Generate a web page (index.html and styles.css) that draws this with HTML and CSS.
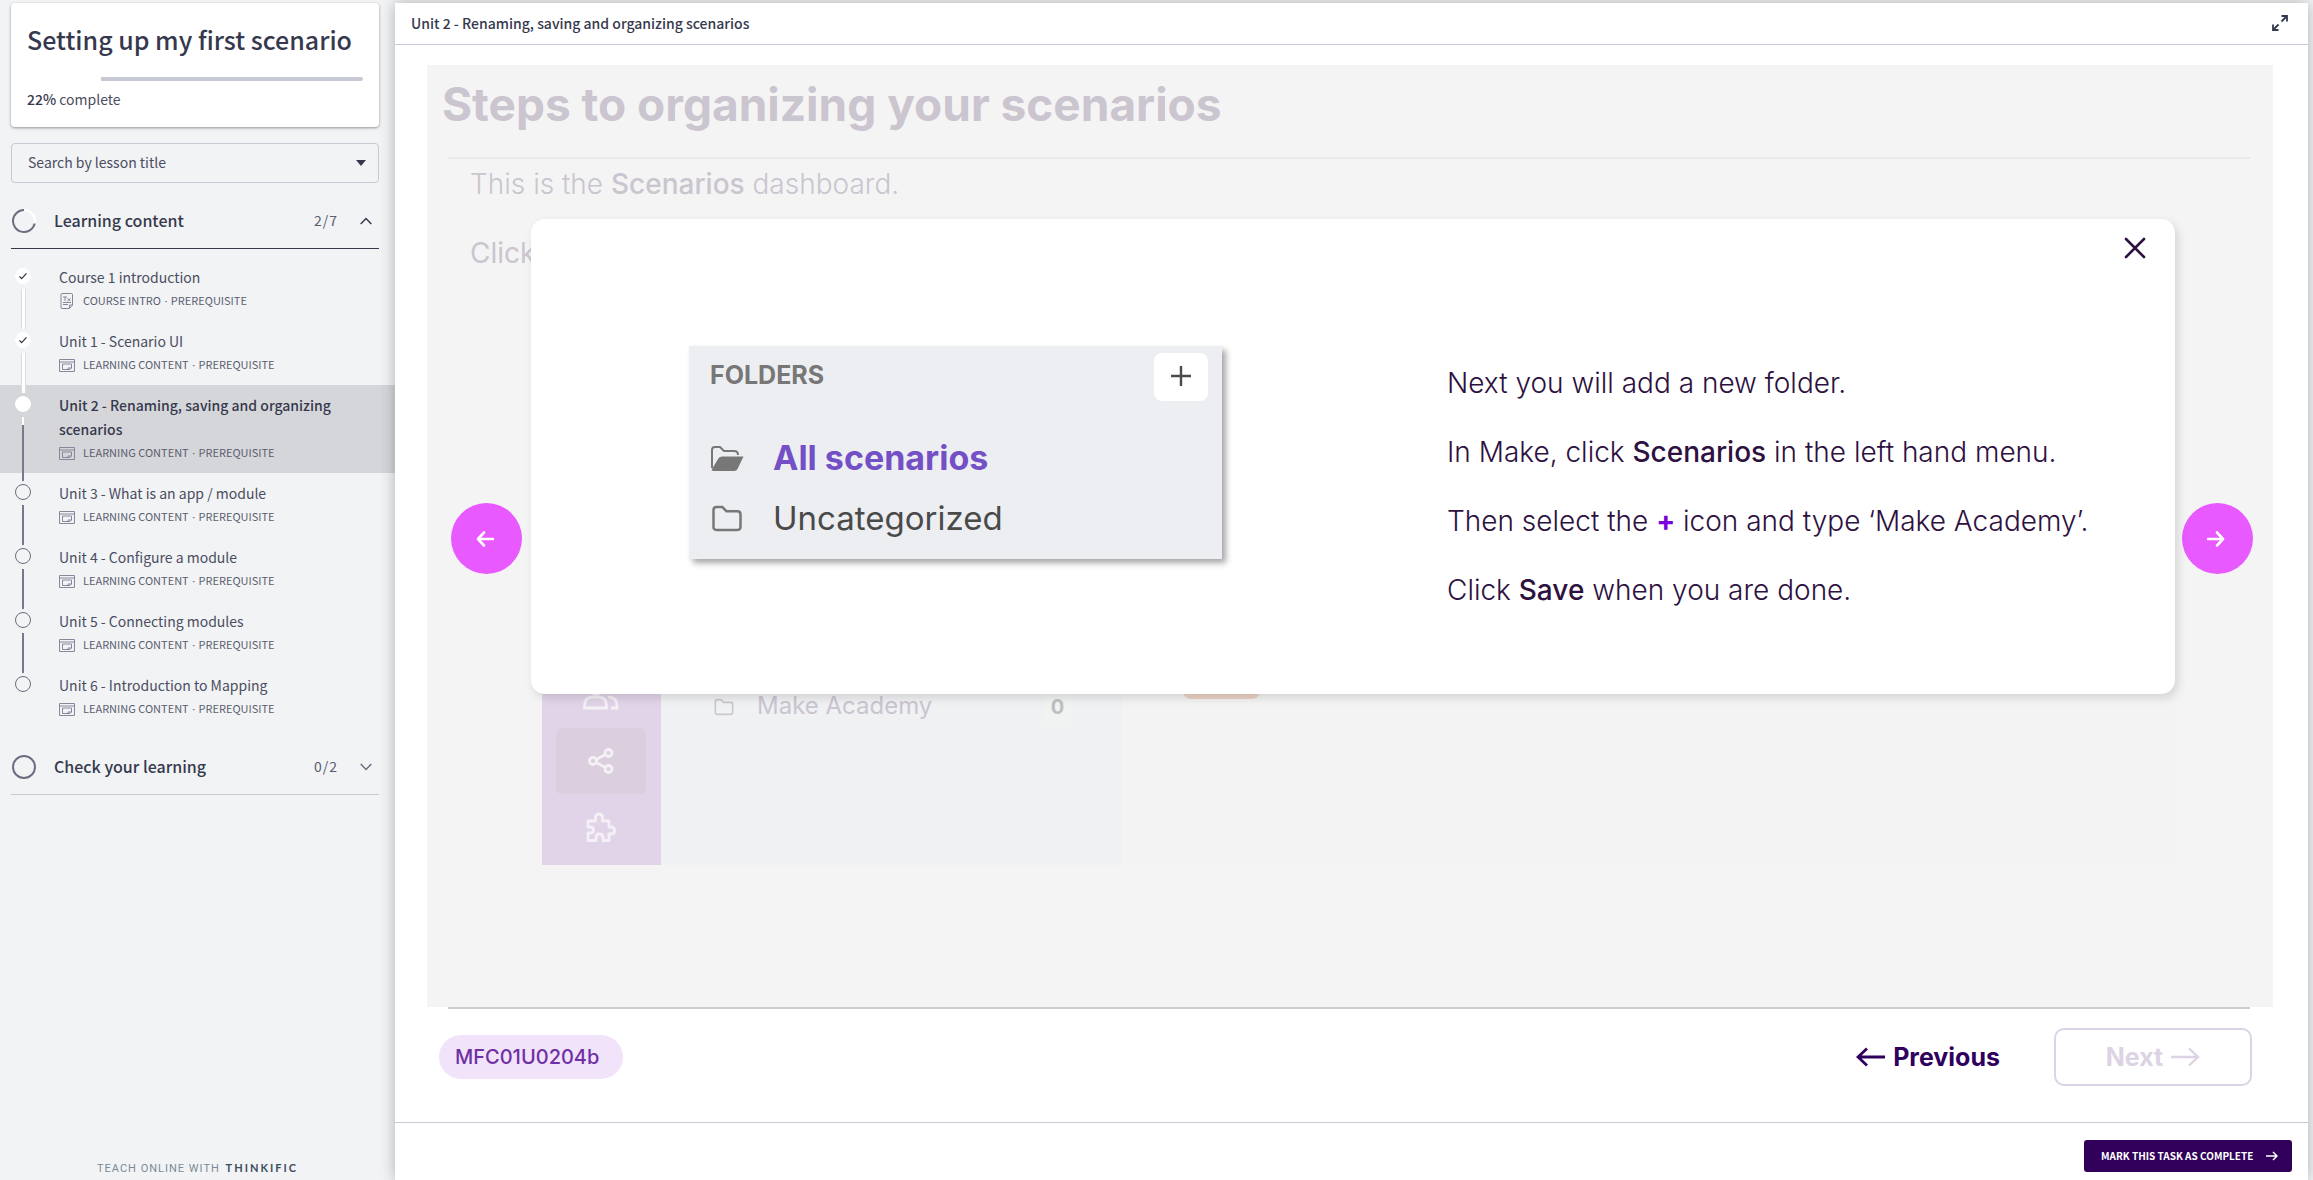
FILE: index.html
```html
<!DOCTYPE html>
<html lang="en">
<head>
<meta charset="utf-8">
<meta name="viewport" content="width=device-width, initial-scale=1">
<title>Setting up my first scenario</title>
<link rel="stylesheet" href="styles.css">
</head>
<body>
<svg class="sprite" aria-hidden="true">
  <symbol id="i-media" viewBox="0 0 16 13"><path d="M.5.5h15v12H.5zM.5 3h15M12.500 9V5h-9v5.500h7.500zM9 10.500V9h3.500" fill="none" stroke="currentColor"/></symbol>
  <symbol id="i-doc" viewBox="0 0 14 16"><path d="M2 .5h9.500q1 0 1 1V12l-3 3.500H2q-1 0-1-1v-13q0-1 1-1zM12.500 12h-3v3.500M3 9.500h8M3 11.500h5M3 4h4M5 4v4M7.500 5.500l3 2.500M10.500 5.500l-3 2.500" fill="none" stroke="currentColor"/></symbol>
  <symbol id="i-check" viewBox="0 0 16 16"><path d="M4 8.500 6.500 11 12 5" fill="none" stroke="#36394d" stroke-width="1.500"/></symbol>
  <symbol id="i-folder" viewBox="0 0 30 26"><path d="M2 5q0-3 3-3h5.500l4 4H25q3 0 3 3v12q0 3-3 3H5q-3 0-3-3z" fill="none" stroke="currentColor" stroke-width="2.400"/></symbol>
</svg>

<div class="app">
  <aside class="sidebar">
    <header class="course">
      <h1 class="course-title">Setting up my first scenario</h1>
      <div class="progress" role="progressbar" aria-label="Course progress" aria-valuenow="22" aria-valuemin="0" aria-valuemax="100"><div class="progress-fill" style="width:22%"></div></div>
      <p class="progress-text"><strong>22%</strong> complete</p>
    </header>

    <div class="search">
      <select class="search-select" aria-label="Search by lesson title"><option>Search by lesson title</option></select>
      <svg class="search-caret" width="10" height="6" viewBox="0 0 10 6"><path d="M0 0h10L5 6z" fill="#36394d"/></svg>
    </div>

    <nav class="chapters" aria-label="Course content">
      <section>
        <button class="chapter open" type="button" aria-expanded="true">
          <svg class="ring" width="24" height="24" viewBox="0 0 24 24" fill="none" stroke-width="2"><circle cx="12" cy="12" r="11" stroke="#fff"/><path d="M12 1a11 11 0 1 0 10.700 13.500" stroke="#6b6d80"/></svg>
          <span class="chapter-name">Learning content</span>
          <span class="chapter-count">2/7</span>
          <svg width="12" height="8" viewBox="0 0 12 8" fill="none" stroke="#36394d" stroke-width="1.500"><path d="M.7 7 6 1.500 11.300 7"/></svg>
        </button>
        <ol class="lessons">
          <li class="lesson done">
            <span class="rail"><svg class="dot" width="16" height="16"><use href="#i-check"/></svg></span>
            <a class="lesson-link" href="#">Course 1 introduction<span class="meta"><svg class="meta-icon" width="16" height="16"><use href="#i-doc"/></svg><span>COURSE INTRO <i>·</i> PREREQUISITE</span></span></a>
          </li>
          <li class="lesson done">
            <span class="rail"><svg class="dot" width="16" height="16"><use href="#i-check"/></svg></span>
            <a class="lesson-link" href="#">Unit 1 - Scenario UI<span class="meta"><svg class="meta-icon" width="16" height="13"><use href="#i-media"/></svg><span>LEARNING CONTENT <i>·</i> PREREQUISITE</span></span></a>
          </li>
          <li class="lesson current">
            <span class="rail"><span class="dot"></span></span>
            <a class="lesson-link" href="#" aria-current="page">Unit 2 - Renaming, saving and organizing scenarios<span class="meta"><svg class="meta-icon" width="16" height="13"><use href="#i-media"/></svg><span>LEARNING CONTENT <i>·</i> PREREQUISITE</span></span></a>
          </li>
          <li class="lesson">
            <span class="rail"><span class="dot"></span></span>
            <a class="lesson-link" href="#">Unit 3 - What is an app / module<span class="meta"><svg class="meta-icon" width="16" height="13"><use href="#i-media"/></svg><span>LEARNING CONTENT <i>·</i> PREREQUISITE</span></span></a>
          </li>
          <li class="lesson">
            <span class="rail"><span class="dot"></span></span>
            <a class="lesson-link" href="#">Unit 4 - Configure a module<span class="meta"><svg class="meta-icon" width="16" height="13"><use href="#i-media"/></svg><span>LEARNING CONTENT <i>·</i> PREREQUISITE</span></span></a>
          </li>
          <li class="lesson">
            <span class="rail"><span class="dot"></span></span>
            <a class="lesson-link" href="#">Unit 5 - Connecting modules<span class="meta"><svg class="meta-icon" width="16" height="13"><use href="#i-media"/></svg><span>LEARNING CONTENT <i>·</i> PREREQUISITE</span></span></a>
          </li>
          <li class="lesson">
            <span class="rail"><span class="dot"></span></span>
            <a class="lesson-link" href="#">Unit 6 - Introduction to Mapping<span class="meta"><svg class="meta-icon" width="16" height="13"><use href="#i-media"/></svg><span>LEARNING CONTENT <i>·</i> PREREQUISITE</span></span></a>
          </li>
        </ol>
      </section>
      <section>
        <button class="chapter" type="button" aria-expanded="false">
          <svg class="ring" width="24" height="24" viewBox="0 0 24 24" fill="none"><circle cx="12" cy="12" r="11" stroke="#6b6d80" stroke-width="2"/></svg>
          <span class="chapter-name">Check your learning</span>
          <span class="chapter-count">0/2</span>
          <svg width="12" height="8" viewBox="0 0 12 8" fill="none" stroke="#6b6d80" stroke-width="1.500"><path d="M.7 1 6 6.500 11.300 1"/></svg>
        </button>
      </section>
    </nav>

    <footer class="brand">TEACH ONLINE WITH <b>THINKIFIC</b></footer>
  </aside>

  <main class="panel">
    <header class="panel-head">
      <h2 class="panel-title">Unit 2 - Renaming, saving and organizing scenarios</h2>
      <button class="icon-button" type="button" aria-label="Full screen">
        <svg width="16" height="16" viewBox="0 0 16 16" fill="none" stroke="#36394d" stroke-width="1.800"><path d="M9.500 6.500 14 2M9.500 1H15v5.500M6.500 9.500 2 14M1 9.500V15h5.500"/></svg>
      </button>
    </header>

    <div class="player">
      <section class="stage">
        <div class="slide">
          <h2 class="slide-title">Steps to organizing your scenarios</h2>
          <p class="slide-text">This is the <b>Scenarios</b> dashboard.</p>
          <p class="slide-text regular">Click</p>
          <div class="dashboard">
            <div class="dash-rail">
              <span class="dash-tile"><svg width="36" height="32" viewBox="0 0 36 32" fill="none" stroke="#f4f1f6" stroke-width="2.800"><circle cx="13" cy="9" r="6"/><path d="M22 3.500a6 6 0 0 1 1 11M1.500 29v-2q0-9 8-9h6q8 0 8 9v2zM25 18q9 0 9 9v2h-6"/></svg></span>
              <span class="dash-tile active"><svg width="26" height="28" viewBox="0 0 26 28" fill="none" stroke="#f4f1f6" stroke-width="2.800"><circle cx="5" cy="14" r="3.500"/><circle cx="20.500" cy="6" r="3.500"/><circle cx="20.500" cy="22" r="3.500"/><path d="m8 12.500 9-4.800M8 15.500l9 4.800"/></svg></span>
              <span class="dash-tile"><svg width="30" height="30" viewBox="0 0 30 30" fill="none" stroke="#f4f1f6" stroke-width="2.800" stroke-linejoin="round"><path d="M2 9h7.500V6q0-4 3.500-4t3.500 4v3H23v6h2q3.500 0 3.500 3.500T25 22h-2v6.500h-6V26q0-4-3.500-4T10 26v2.500H2V21h2q3.500 0 3.500-3T4 15H2z"/></svg></span>
            </div>
            <div class="dash-folders">
              <svg width="20" height="18" viewBox="0 0 30 26"><use href="#i-folder"/></svg>
              <span class="dash-name">Make Academy</span>
              <span class="dash-count">0</span>
            </div>
            <div class="dash-body"><span class="dash-pill"></span></div>
          </div>
        </div>

        <button class="step step-back" type="button" aria-label="Back">
          <svg width="18" height="16" viewBox="0 0 18 16" fill="none" stroke="#fff" stroke-width="2.600" stroke-linecap="round" stroke-linejoin="round"><path d="M17 8H2M8 1.500 2 8l6 6.500"/></svg>
        </button>
        <button class="step step-forward" type="button" aria-label="Forward">
          <svg width="18" height="16" viewBox="0 0 18 16" fill="none" stroke="#fff" stroke-width="2.600" stroke-linecap="round" stroke-linejoin="round"><path d="M1 8h15M10 1.500 16 8l-6 6.500"/></svg>
        </button>

        <div class="modal" role="dialog" aria-label="Add a new folder">
          <button class="modal-close" type="button" aria-label="Close">
            <svg width="22" height="22" viewBox="0 0 22 22" fill="none" stroke="#2d1140" stroke-width="2.600" stroke-linecap="round"><path d="m2 2 18 18M20 2 2 20"/></svg>
          </button>
          <div class="folders">
            <div class="folders-head">
              <span>FOLDERS</span>
              <button class="folders-add" type="button" aria-label="Add folder"><svg width="20" height="20" viewBox="0 0 20 20" fill="none" stroke="#4a4a4a" stroke-width="2.400"><path d="M10 0v20M0 10h20"/></svg></button>
            </div>
            <div class="folder selected"><svg width="34" height="27" viewBox="0 0 34 27"><path d="M2 23V5q0-3 3-3h5l4 4h10q4 0 4 4" fill="none" stroke="#777" stroke-width="2"/><path d="M1.500 25 8 14q1.200-2.500 4-2.500h21.500L28 23q-1.200 3-4 3H3z" fill="#777"/></svg>All scenarios</div>
            <div class="folder"><svg class="closed" width="34" height="27" viewBox="0 0 30 26"><use href="#i-folder"/></svg>Uncategorized</div>
          </div>
          <div class="steps-text">
            <p>Next you will add a new folder.</p>
            <p>In Make, click <b>Scenarios</b> in the left hand menu.</p>
            <p>Then select the <b class="plus">+</b> icon and type ‘Make Academy’.</p>
            <p>Click <b>Save</b> when you are done.</p>
          </div>
        </div>
      </section>

      <footer class="controls">
        <span class="chip">MFC01U0204b</span>
        <button class="nav-button previous" type="button">
          <svg width="29" height="20" viewBox="0 0 29 20" fill="none" stroke="currentColor" stroke-width="2.800"><path d="M29 10H2M11 1.500 2 10l9 8.500"/></svg>Previous
        </button>
        <button class="nav-button next" type="button" disabled>Next
          <svg width="29" height="20" viewBox="0 0 29 20" fill="none" stroke="currentColor" stroke-width="2.400"><path d="M0 10h27M18 1.500l9 8.500-9 8.500"/></svg>
        </button>
      </footer>
    </div>

    <footer class="panel-foot">
      <button class="complete" type="button">MARK THIS TASK AS COMPLETE
        <svg width="12" height="10" viewBox="0 0 12 10" fill="none" stroke="#fff" stroke-width="1.500"><path d="M0 5h11M7 1l4 4-4 4"/></svg>
      </button>
    </footer>
  </main>
</div>
</body>
</html>
```
FILE: styles.css
```css
* {
  box-sizing: border-box;
  margin: 0;
  padding: 0;
}

body {
  background: #f1f3f5;
  color: #36394d;
  font-family: "Noto Sans CJK SC", "Open Sans", sans-serif;
  font-size: 14px;
  line-height: 24px;
}

button,
select {
  border: 0;
  background: none;
  color: inherit;
  font: inherit;
}

.sprite {
  position: absolute;
  width: 0;
  height: 0;
}

.app {
  display: flex;
  min-height: 100vh;
}

/* Sidebar */
.sidebar {
  display: flex;
  flex: none;
  flex-direction: column;
  width: 395px;
  padding-top: 3px;
}

.course {
  height: 124px;
  margin: 0 16px 0 11px;
  padding: 18px 16px 0;
  border-radius: 4px;
  background: #fff;
  box-shadow: 0 1px 3px rgba(0, 0, 0, 0.4);
}

.course-title {
  font-size: 25px;
  font-weight: 500;
  line-height: 36px;
  white-space: nowrap;
}

.progress {
  height: 4px;
  margin: 20px 0 6px;
  border-radius: 2px;
  background: #c7cad5;
}

.progress-fill {
  height: 100%;
  background: #fff;
}

.progress-text {
  color: #4b4d60;
}

.progress-text strong {
  color: #36394d;
  font-weight: 500;
}

.search {
  display: grid;
  align-items: center;
  margin: 16px 16px 10px 11px;
}

.search-select,
.search-caret {
  grid-area: 1 / 1;
}

.search-select {
  appearance: none;
  width: 100%;
  height: 40px;
  padding: 0 16px 2px;
  border: 1px solid #c7cad5;
  border-radius: 4px;
  color: #4b4d60;
}

.search-caret {
  justify-self: end;
  margin-right: 13px;
  pointer-events: none;
}

.chapter {
  display: flex;
  align-items: center;
  width: 368px;
  height: 56px;
  margin-left: 11px;
  padding-right: 7px;
  border-bottom: 1px solid #c7cad5;
  text-align: left;
}

.chapter.open {
  border-color: #36394d;
}

.ring {
  margin: 0 18px 0 1px;
}

.chapter-name {
  flex: 1;
  padding-bottom: 2px;
  font-size: 16px;
  font-weight: 500;
}

.chapter-count {
  margin-right: 22px;
  padding-bottom: 2px;
  color: #5b5d70;
  letter-spacing: 1px;
}

.lessons {
  padding: 8px 0 10px;
  list-style: none;
}

.lesson {
  display: flex;
  padding-right: 48px;
}

.lesson.current {
  background: #d5d6da;
}

.rail {
  display: flex;
  z-index: 1;
  flex: none;
  flex-direction: column;
  align-items: center;
  width: 16px;
  margin: 11px 28px -8px 15px;
}

.rail::after {
  flex: 1;
  width: 2px;
  margin-top: 5px;
  background: #777988;
  content: "";
}

.lesson:last-child .rail::after {
  background: none;
}

.done .rail::after {
  width: 3px;
  border: solid #dcdde1;
  border-width: 0 1px;
  background: #fff;
}

.current .rail::after {
  background: linear-gradient(#fff 8px, #777988 8px);
}

.dot {
  flex: none;
  width: 16px;
  height: 16px;
  border: 1px solid #6b6d80;
  border-radius: 50%;
}

.done .dot,
.current .dot {
  border-color: #fff;
  background: #fff;
}

.lesson-link {
  flex: 1;
  padding: 8px 0;
  color: #4b4d60;
  text-decoration: none;
}

.current .lesson-link {
  color: #36394d;
  font-weight: 500;
}

.meta {
  display: flex;
  align-items: center;
  gap: 8px;
  height: 24px;
  color: #5b5d70;
  font-size: 11px;
  font-weight: 400;
  line-height: 22px;
}

.meta span {
  padding-bottom: 2px;
}

.meta i {
  margin: 0 1px;
  font-family: "Open Sans", sans-serif;
  font-style: normal;
}

.meta-icon {
  color: #85879a;
}

.brand {
  margin: auto 0 0;
  color: #7c8a97;
  font-family: Roboto, sans-serif;
  font-size: 11px;
  line-height: 22px;
  letter-spacing: 1px;
  text-align: center;
}

.brand b {
  margin-left: 2px;
  color: #3c4e60;
  font-family: Lato, sans-serif;
  font-weight: 700;
  letter-spacing: 2px;
}

/* Lesson panel */
.panel {
  display: flex;
  flex: 1;
  flex-direction: column;
  min-width: 0;
  margin: 3px 5px 0 0;
  background: #fff;
  box-shadow: 0 0 14px rgba(0, 0, 0, 0.28);
}

.panel-head {
  display: flex;
  align-items: center;
  justify-content: space-between;
  height: 42px;
  padding: 0 20px 2px 16px;
  border-bottom: 1px solid #c7cad5;
}

.panel-title {
  font-size: 14px;
  font-weight: 500;
}

.icon-button {
  display: flex;
}

.player {
  display: flex;
  flex: 1;
  flex-direction: column;
  padding: 20px 35px 0 32px;
  color: #2d1140;
  font-family: Inter, sans-serif;
}

.stage {
  position: relative;
  flex: 1;
  background: #f4f4f4;
}

.slide {
  color: #cac5cf;
}

.slide-title {
  margin: 0 23px 0 21px;
  padding: 11px 0 25px;
  border-bottom: 2px solid #eaeaea;
  font-size: 46px;
  font-weight: 700;
  line-height: 56px;
  text-indent: -6px;
}

.slide-text {
  height: 69px;
  padding: 8px 0 0 43px;
  font-size: 28px;
  font-weight: 300;
  line-height: 35px;
}

.slide-text.regular {
  font-weight: 400;
}

.slide-text b,
.steps-text b {
  font-weight: 500;
}

/* Faded application window on the slide, mostly behind the modal */
.dashboard {
  display: flex;
  height: 500px;
  margin: 68px 98px 0 115px;
}

.dash-rail {
  display: flex;
  flex-direction: column;
  justify-content: flex-end;
  width: 119px;
  padding: 0 15px 5px 14px;
  background: #e1d4e9;
}

.dash-tile {
  display: flex;
  align-items: center;
  justify-content: center;
  height: 66px;
  border-radius: 6px;
}

.dash-tile.active {
  background: #dacedf;
}

.dash-folders {
  display: flex;
  align-items: flex-start;
  width: 461px;
  padding: 324px 51px 0 53px;
  background: #f0f1f3;
}

.dash-folders svg {
  margin-top: 9px;
}

.dash-name {
  flex: 1;
  margin-left: 23px;
  font-size: 24px;
  line-height: 34px;
}

.dash-count {
  width: 27px;
  border-radius: 6px;
  background: #f1f2f2;
  color: #bfbfbf;
  font-size: 20px;
  font-weight: 700;
  line-height: 36px;
  text-align: center;
}

.dash-body {
  flex: 1;
  padding: 298px 0 0 61px;
  background: #f3f3f3;
}

.dash-pill {
  display: block;
  width: 77px;
  height: 36px;
  border-radius: 8px;
  background: #ebd3c5;
}

/* Controls laid over the slide */
.step {
  position: absolute;
  top: 438px;
  display: flex;
  align-items: center;
  justify-content: center;
  width: 71px;
  height: 71px;
  padding-right: 4px;
  border-radius: 50%;
  background: #e859ff;
}

.step-back {
  left: 24px;
}

.step-forward {
  right: 20px;
}

.modal {
  position: absolute;
  top: 154px;
  right: 98px;
  left: 104px;
  display: flex;
  align-items: flex-start;
  gap: 225px;
  height: 475px;
  padding: 127px 60px 0 158px;
  border-radius: 14px;
  background: #fff;
  box-shadow: 3px 4px 10px rgba(0, 0, 0, 0.13);
}

.modal-close {
  position: absolute;
  top: 18px;
  right: 29px;
  display: flex;
}

.folders {
  flex: none;
  width: 533px;
  height: 213px;
  padding: 7px 14px 0 21px;
  background: #edeef2;
  box-shadow: 4px 4px 6px rgba(0, 0, 0, 0.35);
}

.folders-head {
  display: flex;
  justify-content: space-between;
  margin-bottom: 27px;
  color: #777;
  font-size: 25px;
  font-weight: 700;
  line-height: 44px;
}

.folders-add {
  display: flex;
  justify-content: center;
  width: 54px;
  height: 48px;
  padding-top: 13px;
  border-radius: 8px;
  background: #fff;
}

.folder {
  display: flex;
  align-items: center;
  gap: 29px;
  color: #4a4a4a;
  font-size: 33px;
  line-height: 60px;
}

.folder.selected {
  color: #7350c5;
  font-size: 34px;
  font-weight: 700;
}

.closed {
  color: #777;
}

.steps-text {
  display: grid;
  gap: 34px;
  padding-top: 20px;
  font-size: 28px;
  font-weight: 300;
  line-height: 35px;
  white-space: nowrap;
}

.steps-text .plus {
  color: #7a00dc;
  font-weight: 700;
}

/* Player footer */
.controls {
  position: relative;
  display: flex;
  align-items: center;
  gap: 54px;
  height: 115px;
  margin: 0 21px 0 12px;
  padding-bottom: 16px;
}

.controls::before {
  position: absolute;
  top: 0;
  right: 2px;
  left: 9px;
  height: 2px;
  background: #d2cbd2;
  content: "";
}

.chip {
  margin-right: auto;
  padding: 0 24px 0 16px;
  border-radius: 22px;
  background: #f0e3fa;
  color: #7030a4;
  font-size: 20px;
  font-weight: 500;
  line-height: 44px;
}

.nav-button {
  display: flex;
  align-items: center;
  gap: 8px;
  height: 58px;
  color: #30005f;
  font-size: 25px;
  font-weight: 700;
}

.next {
  justify-content: center;
  width: 198px;
  border: 2px solid #dcd3e4;
  border-radius: 10px;
  color: #dcd3e4;
}

.panel-foot {
  display: flex;
  align-items: center;
  justify-content: flex-end;
  height: 58px;
  padding: 8px 16px 0;
  border-top: 1px solid #c7cad5;
}

.complete {
  display: flex;
  align-items: center;
  justify-content: space-between;
  width: 208px;
  height: 32px;
  padding: 0 14px 0 17px;
  border-radius: 3px;
  background: #30005b;
  color: #fff;
  font-size: 10px;
  font-weight: 700;
}
```
